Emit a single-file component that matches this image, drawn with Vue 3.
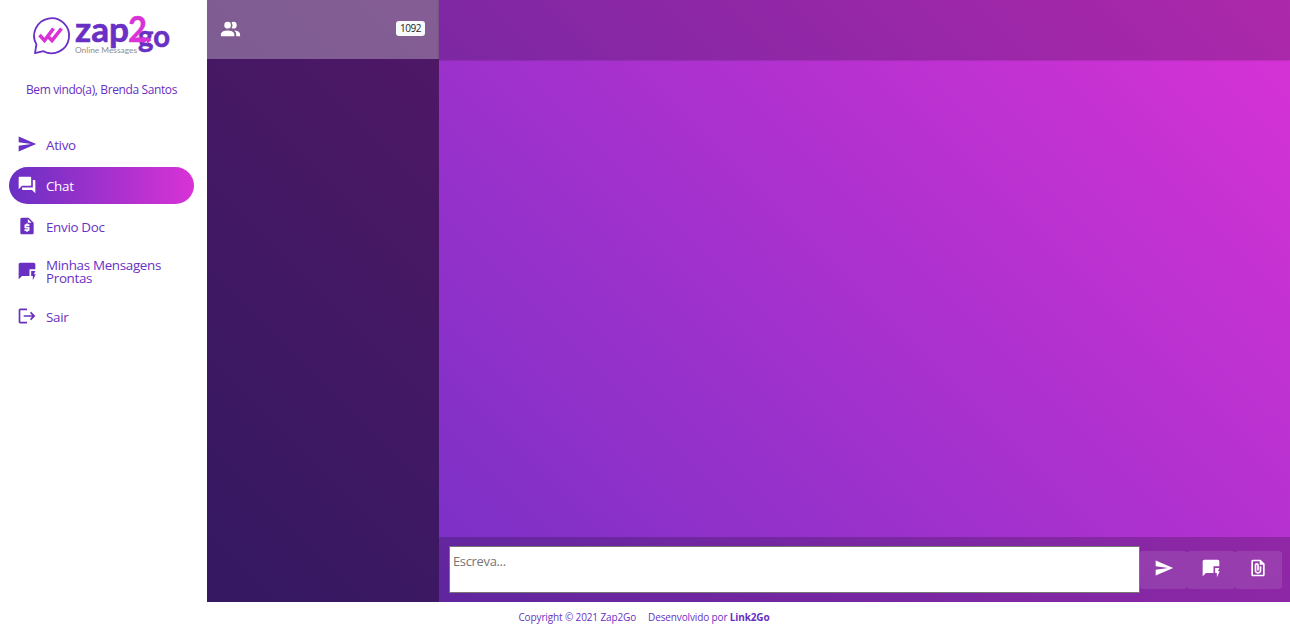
<script setup>
import { ref } from "vue";

const user = "Brenda Santos";
const total = 1092;
const active = ref("chat");
const message = ref("");

const icons = {
  send: "M2 21L23 12 2 3v7l15 2-15 2z",
  chat: "M21 6h-2v9H6v2c0 .55.45 1 1 1h11l4 4V7c0-.55-.45-1-1-1zm-4 6V3c0-.55-.45-1-1-1H3c-.55 0-1 .45-1 1v14l4-4h10c.55 0 1-.45 1-1z",
  doc: "M14 2H6c-1.1 0-1.99.9-1.99 2L4 20c0 1.1.89 2 1.99 2H18c1.1 0 2-.9 2-2V8l-6-6zm1 10h-4v1h3c.55 0 1 .45 1 1v3c0 .55-.45 1-1 1h-1v1h-2v-1H9v-2h4v-1h-3c-.55 0-1-.45-1-1v-3c0-.55.45-1 1-1h1V9h2v1h2v2zm-2-4V3.5L17.5 8H13z",
  reply: "M22 4c0-1.1-.9-2-2-2H4c-1.1 0-1.99.9-1.99 2L2 22l4-4h9v-8h7V4zM22.5 16h-2.2l1.7-4h-5v6h2v5z",
  logout: "M17 7l-1.41 1.41L18.17 11H8v2h10.17l-2.58 2.58L17 17l5-5zM4 5h8V3H4c-1.1 0-2 .9-2 2v14c0 1.1.9 2 2 2h8v-2H4V5z",
  attach: "M15 2H6c-1.1 0-2 .9-2 2v16c0 1.1.9 2 2 2h12c1.1 0 2-.9 2-2V7l-5-5zM6 20V4h8v4h4v12H6zm10-10v5c0 2.21-1.79 4-4 4s-4-1.79-4-4V8.5C8 7.12 9.12 6 10.5 6S13 7.12 13 8.5V15h-2V8.5c0-.28-.22-.5-.5-.5s-.5.22-.5.5V15c0 1.1.9 2 2 2s2-.9 2-2v-5h2z",
  people: "M16 17V19H2V17S2 13 9 13 16 17 16 17M12.5 7.5A3.5 3.5 0 1 0 9 11 3.5 3.5 0 0 0 12.5 7.5M15.94 13A5.32 5.32 0 0 1 18 17V19H22V17S22 13.37 15.94 13M15 4A3.39 3.39 0 0 0 13.07 4.59 5 5 0 0 1 13.07 10.41 3.39 3.39 0 0 0 15 11 3.5 3.5 0 0 0 15 4Z",
};

const menu = [
  { id: "ativo", label: "Ativo", icon: "send" },
  { id: "chat", label: "Chat", icon: "chat" },
  { id: "doc", label: "Envio Doc", icon: "doc" },
  { id: "prontas", label: "Minhas Mensagens Prontas", icon: "reply" },
  { id: "sair", label: "Sair", icon: "logout" },
];

const actions = ["send", "reply", "attach"];
</script>

<template>
  <div class="page">
    <div class="main">
      <aside class="sidebar">
        <svg class="logo" viewBox="0 0 140 46" role="img" aria-label="zap2go">
          <path class="bubble" d="M4.4 31.4A17.5 17.5 0 1 1 11.4 38.2L3 40.2Z" />
          <path class="check" d="M7.5 22l5 5.5L21.5 15.5M16.5 24l3.5 3.5L29.5 15.5" />
          <text class="brand" x="43" y="29" textLength="54" lengthAdjust="spacingAndGlyphs">zap</text>
          <text class="brand go" x="106" y="34" textLength="32" lengthAdjust="spacingAndGlyphs">go</text>
          <text class="two" x="96" y="29" textLength="19" lengthAdjust="spacingAndGlyphs">2</text>
          <path class="arrow" d="M108 25.6h7v-2.6l4.5 4-4.5 4v-2.4h-7z" />
          <text class="tagline" x="43" y="40" textLength="62" lengthAdjust="spacingAndGlyphs">Online Messages</text>
        </svg>

        <p class="welcome">Bem vindo(a), {{ user }}</p>

        <nav class="menu">
          <a
            v-for="item in menu"
            :key="item.id"
            class="menu-item"
            :class="{ active: active === item.id }"
            @click="active = item.id"
          >
            <svg class="icon" viewBox="0 0 24 24"><path :d="icons[item.icon]" /></svg>
            <span>{{ item.label }}</span>
          </a>
        </nav>
      </aside>

      <div class="chat">
        <section class="contacts">
          <header class="contacts-header">
            <svg class="icon people" viewBox="0 0 24 24"><path :d="icons.people" /></svg>
            <span class="badge">{{ total }}</span>
          </header>
        </section>

        <section class="conversation">
          <header class="conversation-header"></header>
          <div class="messages"></div>
          <div class="composer">
            <textarea v-model="message" placeholder="Escreva..."></textarea>
            <button v-for="action in actions" :key="action" class="action-btn">
              <svg class="icon" viewBox="0 0 24 24"><path :d="icons[action]" /></svg>
            </button>
          </div>
        </section>
      </div>
    </div>

    <footer class="footer">
      <span>Copyright © 2021 Zap2Go</span>
      <span>Desenvolvido por <strong>Link2Go</strong></span>
    </footer>
  </div>
</template>

<style>
body {
  margin: 0;
  overflow: hidden;
}
</style>

<style scoped>
.page {
  height: 100vh;
  display: flex;
  flex-direction: column;
  background: #ffffff;
  color: #6930c3;
  font-family: "Open Sans", "Noto Sans", sans-serif;
}

.main {
  flex: 1;
  display: flex;
  min-height: 0;
}

.sidebar {
  width: 207px;
  flex-shrink: 0;
  box-sizing: border-box;
  padding: 13px 13px 0 9px;
  display: flex;
  flex-direction: column;
}

.logo {
  width: 140px;
  height: 46px;
  margin-left: 23px;
  overflow: visible;
}

.bubble {
  fill: none;
  stroke: #6930c3;
  stroke-width: 1.8;
  stroke-linejoin: round;
}

.check {
  fill: none;
  stroke: #d932d6;
  stroke-width: 3.6;
}

.brand {
  fill: #6930c3;
  stroke: #6930c3;
  stroke-width: 0.6;
  font-family: Lato, sans-serif;
  font-size: 34px;
  font-weight: 700;
}

.brand.go {
  font-size: 31px;
}

.two {
  fill: #d932d6;
  stroke: #d932d6;
  stroke-width: 0.4;
  font-family: Lato, sans-serif;
  font-size: 37px;
  font-weight: 700;
}

.arrow {
  fill: #d932d6;
}

.tagline {
  fill: #8d8d8d;
  font-family: Lato, sans-serif;
  font-size: 8px;
}

.welcome {
  margin: 22px 0 28px;
  font-size: 12px;
  line-height: 17px;
  letter-spacing: -0.38px;
  text-align: center;
  white-space: nowrap;
}

.menu {
  display: flex;
  flex-direction: column;
  gap: 4px;
}

.menu-item {
  min-height: 37px;
  box-sizing: border-box;
  padding: 10px 20px 9px 8px;
  border-radius: 19px;
  display: flex;
  align-items: center;
  gap: 9px;
  font-size: 13.4px;
  line-height: 13px;
  letter-spacing: -0.32px;
  cursor: pointer;
}

.menu-item.active {
  background: linear-gradient(90deg, #6930c3, #d932d6);
  color: #ffffff;
  font-weight: 500;
}

.icon {
  width: 20px;
  height: 20px;
  flex-shrink: 0;
  fill: currentColor;
}

.menu-item .icon {
  margin: -3px 0 -1px;
}

.chat {
  flex: 1;
  display: flex;
  min-width: 0;
  background: linear-gradient(45deg, #6930c3, #d932d6);
}

.contacts {
  width: 232px;
  flex-shrink: 0;
  background: rgba(0, 0, 0, 0.5);
}

.contacts-header {
  height: 59px;
  box-sizing: border-box;
  padding: 0 14px 2px 12px;
  display: flex;
  align-items: center;
  justify-content: space-between;
  background: rgba(255, 255, 255, 0.3);
  color: #ffffff;
}

.people {
  width: 23px;
  height: 23px;
  margin-top: 1px;
}

.badge {
  height: 15px;
  padding: 0 4px;
  border-radius: 3px;
  background: #f8f9fa;
  color: #212529;
  font-size: 10px;
  line-height: 15px;
  letter-spacing: -0.45px;
}

.conversation {
  flex: 1;
  display: flex;
  flex-direction: column;
  min-width: 0;
}

.conversation-header {
  height: 60px;
  background: rgba(0, 0, 0, 0.2);
  box-shadow: 0 0 2px rgba(0, 0, 0, 0.3);
}

.messages {
  flex: 1;
}

.composer {
  height: 65px;
  box-sizing: border-box;
  padding: 9px 8px 9px 10px;
  display: flex;
  align-items: center;
  background: rgba(0, 0, 0, 0.2);
}

.composer textarea {
  flex: 1;
  height: 47px;
  box-sizing: border-box;
  margin: 0;
  padding: 4px 3px;
  border: 1px solid #767676;
  border-radius: 0;
  outline: none;
  resize: none;
  font-family: inherit;
  font-size: 13px;
  line-height: 21px;
  letter-spacing: -0.35px;
}

.composer textarea::placeholder {
  color: #757575;
}

.action-btn {
  width: 47.3px;
  height: 38px;
  margin-top: 1px;
  padding: 0 0 4px;
  border: none;
  border-radius: 3px;
  display: flex;
  align-items: center;
  justify-content: center;
  background: rgba(255, 255, 255, 0.1);
  color: #ffffff;
  cursor: pointer;
}

.footer {
  height: 26px;
  display: flex;
  justify-content: center;
  gap: 12px;
  padding-right: 2px;
  font-size: 10px;
  line-height: 31px;
  letter-spacing: -0.13px;
}
</style>
